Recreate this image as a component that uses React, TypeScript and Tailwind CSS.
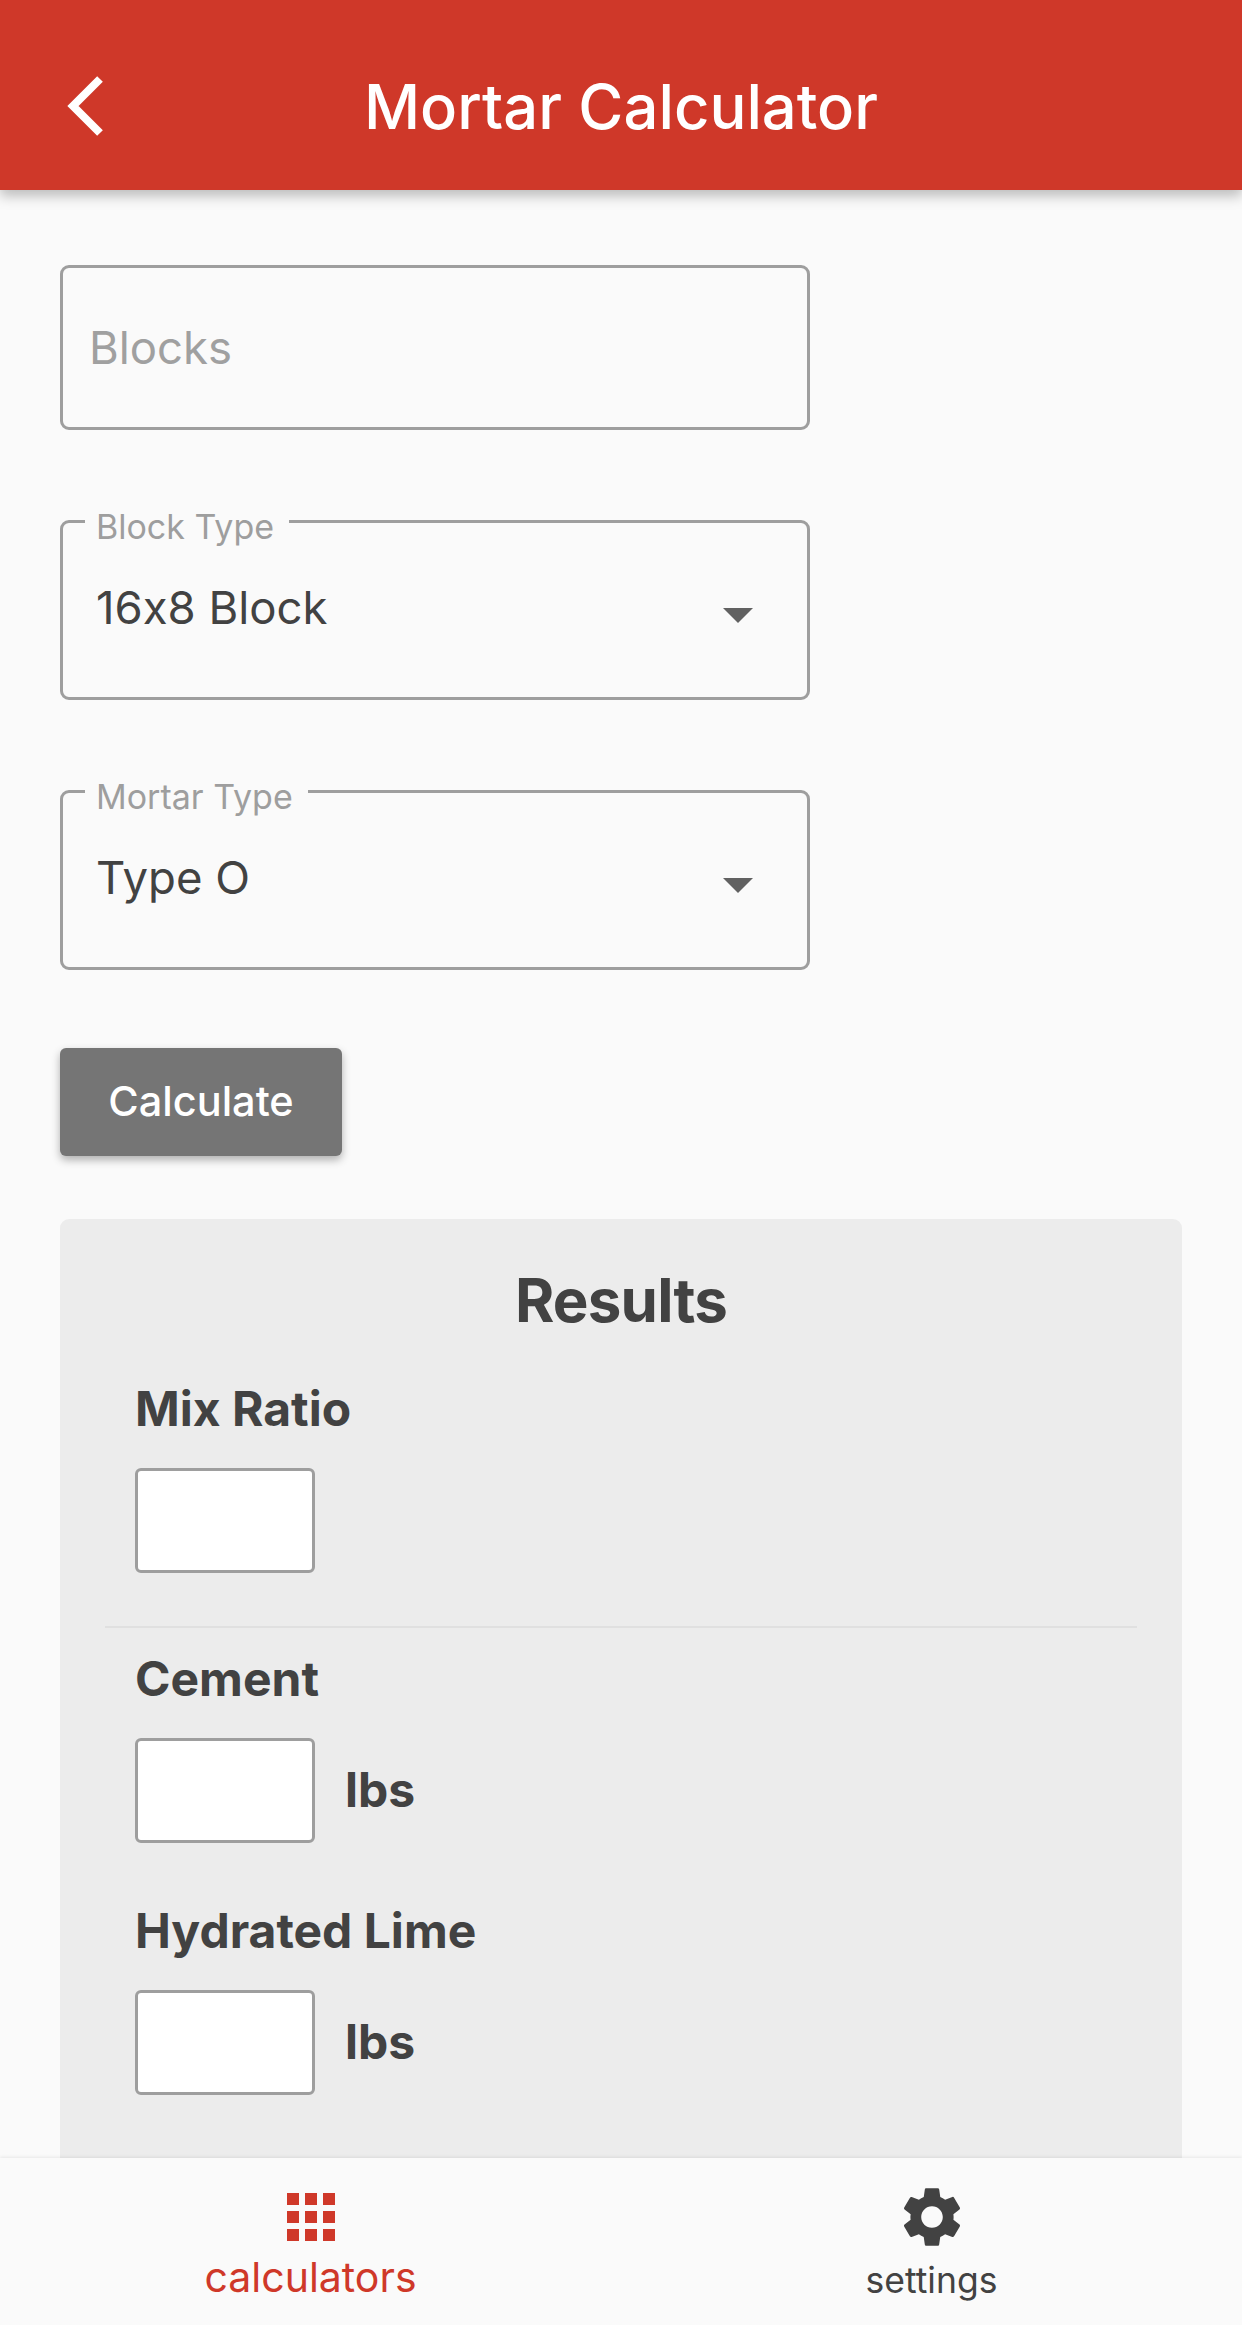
import React from 'react';
import { MdApps, MdSettings, MdArrowDropDown } from 'react-icons/md';

function SelectField({ label, value }: { label: string; value: string }) {
  return (
    <div className="relative flex h-[180px] w-[750px] items-center justify-between rounded-[9px] border-[3px] border-[#9e9e9e] pl-[33px] pr-[33px]">
      <span className="absolute left-[22px] top-[-14px] bg-[#fafafa] pl-[11px] pr-[15px] text-[34px] leading-[36px] text-[#9e9e9e]">{label}</span>
      <span className="mb-[4px] text-[45.5px] leading-[54px] text-[#424242] [font-feature-settings:'calt'_0]">{value}</span>
      <MdArrowDropDown className="mt-[8px] text-[#616161]" size={72} />
    </div>
  );
}

function ResultRow({ unit }: { unit?: string }) {
  return (
    <div className="flex items-center gap-[30px]">
      <div className="h-[105px] w-[180px] rounded-[6px] border-[3px] border-[#9e9e9e] bg-white"></div>
      {unit && <span className="mb-[2px] text-[48px] font-bold leading-[56px] text-[#424242]">{unit}</span>}
    </div>
  );
}

export default function App() {
  return (
    <div className="flex h-[2325px] w-[1242px] flex-col overflow-hidden bg-[#fafafa] font-['Inter',sans-serif]">
      {/* App bar */}
      <header className="relative z-10 grid h-[190px] shrink-0 grid-cols-[1fr_auto_1fr] items-center bg-[#cf3829] pt-[24px] shadow-[0_6px_12px_rgba(0,0,0,0.25)]">
        <div className="pl-[60px]">
          <svg width="48" height="72" viewBox="0 0 48 72" fill="none" className="mt-[-2px]">
            <path d="M40 9L13 36l27 27" stroke="white" strokeWidth="8" />
          </svg>
        </div>
        <h1 className="text-[61.5px] font-medium leading-[70px] text-white">Mortar Calculator</h1>
        <div></div>
      </header>

      <main className="flex-1 overflow-hidden px-[60px] pt-[75px]">
        <input
          placeholder="Blocks"
          className="h-[165px] w-[750px] rounded-[9px] border-[3px] border-[#9e9e9e] bg-transparent pl-[26px] text-[45.5px] text-[#424242] outline-none placeholder:text-[#a0a0a0]"
        />

        <div className="mt-[90px] flex flex-col gap-[90px]">
          <SelectField label="Block Type" value="16x8 Block" />
          <SelectField label="Mortar Type" value="Type O" />
        </div>

        <button className="mt-[78px] block h-[108px] w-[282px] rounded-[6px] bg-[#757575] pb-[2px] text-[41.5px] font-medium text-white shadow-[0_4px_8px_rgba(0,0,0,0.3)]">
          Calculate
        </button>

        {/* Results panel runs on under the bottom bar */}
        <section className="mt-[63px] h-[1100px] rounded-[9px] bg-[#ececec] px-[45px] pt-[46px]">
          <h2 className="text-center text-[60px] font-bold leading-[70px] tracking-[-0.8px] text-[#424242]">Results</h2>

          <div className="px-[30px]">
            <h3 className="mt-[46px] text-[48px] font-bold leading-[56px] text-[#424242]">Mix Ratio</h3>
            <div className="mt-[31px]">
              <ResultRow />
            </div>
          </div>

          <div className="mt-[53px] h-[2px] bg-[#e0e0e0]"></div>

          <div className="px-[30px]">
            <h3 className="mt-[23px] text-[48px] font-bold leading-[56px] text-[#424242]">Cement</h3>
            <div className="mt-[31px]">
              <ResultRow unit="lbs" />
            </div>
            <h3 className="mt-[60px] text-[48px] font-bold leading-[56px] text-[#424242]">Hydrated Lime</h3>
            <div className="mt-[31px]">
              <ResultRow unit="lbs" />
            </div>
          </div>
        </section>
      </main>

      {/* Bottom navigation */}
      <nav className="relative z-10 grid h-[167px] shrink-0 grid-cols-2 bg-[#fafafa] shadow-[0_-1px_3px_rgba(0,0,0,0.08)]">
        <div className="flex flex-col items-center pt-[23px] text-[#cf3829]">
          <MdApps size={72} />
          <span className="mt-[-1px] text-[41px] leading-[50px]">calculators</span>
        </div>
        <div className="flex flex-col items-center pt-[23px] text-[#424242]">
          <MdSettings size={72} />
          <span className="mt-[6px] text-[35.5px] leading-[44px]">settings</span>
        </div>
      </nav>
    </div>
  );
}
